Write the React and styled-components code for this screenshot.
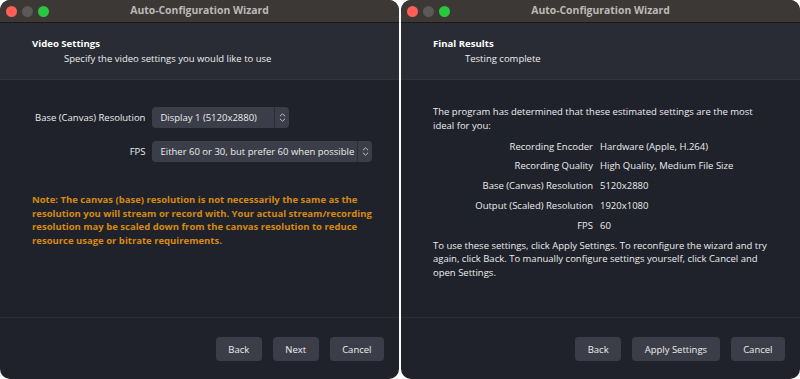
import React from 'react'
import styled, { createGlobalStyle } from 'styled-components'

const GlobalStyle = createGlobalStyle`
  html, body {
    margin: 0;
    padding: 0;
    background: #ffffff;
  }
  body {
    font-family: 'Open Sans', 'Noto Sans', sans-serif;
  }
`

const Desktop = styled.div`
  display: flex;
  gap: 2px;
  width: 800px;
  height: 379px;
`

const Window = styled.section`
  flex: 1;
  min-width: 0;
  display: flex;
  flex-direction: column;
  border-radius: 10px;
  overflow: hidden;
  background: #1f222a;
  color: #ececec;
  font-size: 9.5px;
  line-height: 13.5px;
`

const TitleBar = styled.header`
  height: 22px;
  flex-shrink: 0;
  display: grid;
  grid-template-columns: 1fr auto 1fr;
  align-items: center;
  background: #3b3836;
  border-bottom: 1px solid #1a1918;
`

const Lights = styled.div`
  display: flex;
  gap: 5px;
  padding-left: 6px;
`

const Light = styled.span`
  width: 11px;
  height: 11px;
  border-radius: 50%;
  background: ${(p) => p.$color};
`

const Title = styled.h1`
  margin: 0;
  font-size: 10.4px;
  font-weight: 700;
  color: #bdbab7;
`

const Header = styled.div`
  flex-shrink: 0;
  height: 57px;
  box-sizing: border-box;
  padding: 14px 32px 0;
  background: #292c35;
  border-bottom: 1px solid #30333c;
`

const Heading = styled.h2`
  margin: 0;
  font-size: 9.6px;
  font-weight: 700;
  color: #ffffff;
`

const Subtitle = styled.p`
  margin: 1.5px 0 0 32px;
`

const Body = styled.div`
  flex: 1;
  padding: 0 30px 0 32px;
  border-bottom: 1px solid #2c2f38;
`

const SettingsForm = styled.div`
  display: grid;
  grid-template-columns: ${(p) => p.$labelWidth || 'auto'} 1fr;
  column-gap: 7px;
  row-gap: ${(p) => p.$rowGap};
  align-items: center;
  margin-top: ${(p) => p.$top};
`

const Label = styled.span`
  text-align: right;
  white-space: nowrap;
  padding-left: ${(p) => p.$indent || '0'};
`

const Value = styled.span`
  white-space: nowrap;
`

const Combo = styled.div`
  justify-self: start;
  display: flex;
  width: ${(p) => p.$width};
  height: 21px;
  border-radius: 4px;
  background: #3b3e48;
  overflow: hidden;
`

const ComboText = styled.span`
  flex: 1;
  padding-left: 8px;
  line-height: 21px;
  white-space: nowrap;
  overflow: hidden;
`

const ComboArrow = styled.span`
  width: 14px;
  display: flex;
  align-items: center;
  justify-content: center;
  border-left: 1px solid #2b2e36;
`

const Note = styled.p`
  margin: 31px 0 0;
  font-weight: 700;
  color: #d78a10;
  white-space: nowrap;
`

const Paragraph = styled.p`
  margin: ${(p) => p.$margin};
  white-space: nowrap;
`

const Footer = styled.footer`
  height: 61px;
  flex-shrink: 0;
  box-sizing: border-box;
  display: flex;
  justify-content: flex-end;
  align-items: flex-start;
  gap: 11px;
  padding: 19px 15px 0;
`

const Button = styled.button`
  height: 24px;
  padding: 0 12.5px;
  border: none;
  border-radius: 4px;
  background: #3b3e48;
  color: #ededed;
  font-family: inherit;
  font-size: 9.5px;
`

function Chevrons() {
  return (
    <svg width="7" height="11" viewBox="0 0 7 11" fill="none">
      <path d="M1.2 4 L3.5 1.8 L5.8 4" stroke="#c4c4c8" strokeWidth="1" strokeLinecap="round" strokeLinejoin="round" />
      <path d="M1.2 7 L3.5 9.2 L5.8 7" stroke="#c4c4c8" strokeWidth="1" strokeLinecap="round" strokeLinejoin="round" />
    </svg>
  )
}

function WizardWindow({ heading, subtitle, buttons, children }) {
  return (
    <Window>
      <TitleBar>
        <Lights>
          <Light $color="#fe5f57" />
          <Light $color="#5b5957" />
          <Light $color="#29c73f" />
        </Lights>
        <Title>Auto-Configuration Wizard</Title>
      </TitleBar>
      <Header>
        <Heading>{heading}</Heading>
        <Subtitle>{subtitle}</Subtitle>
      </Header>
      <Body>{children}</Body>
      <Footer>
        {buttons.map((b) => (
          <Button key={b}>{b}</Button>
        ))}
      </Footer>
    </Window>
  )
}

const results = [
  ['Recording Encoder', 'Hardware (Apple, H.264)'],
  ['Recording Quality', 'High Quality, Medium File Size'],
  ['Base (Canvas) Resolution', '5120x2880'],
  ['Output (Scaled) Resolution', '1920x1080'],
  ['FPS', '60'],
]

export default function App() {
  return (
    <>
      <GlobalStyle />
      <Desktop>
        <WizardWindow
          heading="Video Settings"
          subtitle="Specify the video settings you would like to use"
          buttons={['Back', 'Next', 'Cancel']}
        >
          <SettingsForm $top="27px" $rowGap="13px">
            <Label $indent="3px">Base (Canvas) Resolution</Label>
            <Combo $width="137px">
              <ComboText>Display 1 (5120x2880)</ComboText>
              <ComboArrow>
                <Chevrons />
              </ComboArrow>
            </Combo>
            <Label>FPS</Label>
            <Combo $width="220px">
              <ComboText>Either 60 or 30, but prefer 60 when possible</ComboText>
              <ComboArrow>
                <Chevrons />
              </ComboArrow>
            </Combo>
          </SettingsForm>
          <Note>
            Note: The canvas (base) resolution is not necessarily the same as the
            <br />
            resolution you will stream or record with. Your actual stream/recording
            <br />
            resolution may be scaled down from the canvas resolution to reduce
            <br />
            resource usage or bitrate requirements.
          </Note>
        </WizardWindow>
        <WizardWindow
          heading="Final Results"
          subtitle="Testing complete"
          buttons={['Back', 'Apply Settings', 'Cancel']}
        >
          <Paragraph $margin="25px 0 0">
            The program has determined that these estimated settings are the most
            <br />
            ideal for you:
          </Paragraph>
          <SettingsForm $top="7.5px" $rowGap="6.25px" $labelWidth="160px">
            {results.map(([label, value]) => (
              <React.Fragment key={label}>
                <Label>{label}</Label>
                <Value>{value}</Value>
              </React.Fragment>
            ))}
          </SettingsForm>
          <Paragraph $margin="6.5px 0 0">
            To use these settings, click Apply Settings. To reconfigure the wizard and try
            <br />
            again, click Back. To manually configure settings yourself, click Cancel and
            <br />
            open Settings.
          </Paragraph>
        </WizardWindow>
      </Desktop>
    </>
  )
}
